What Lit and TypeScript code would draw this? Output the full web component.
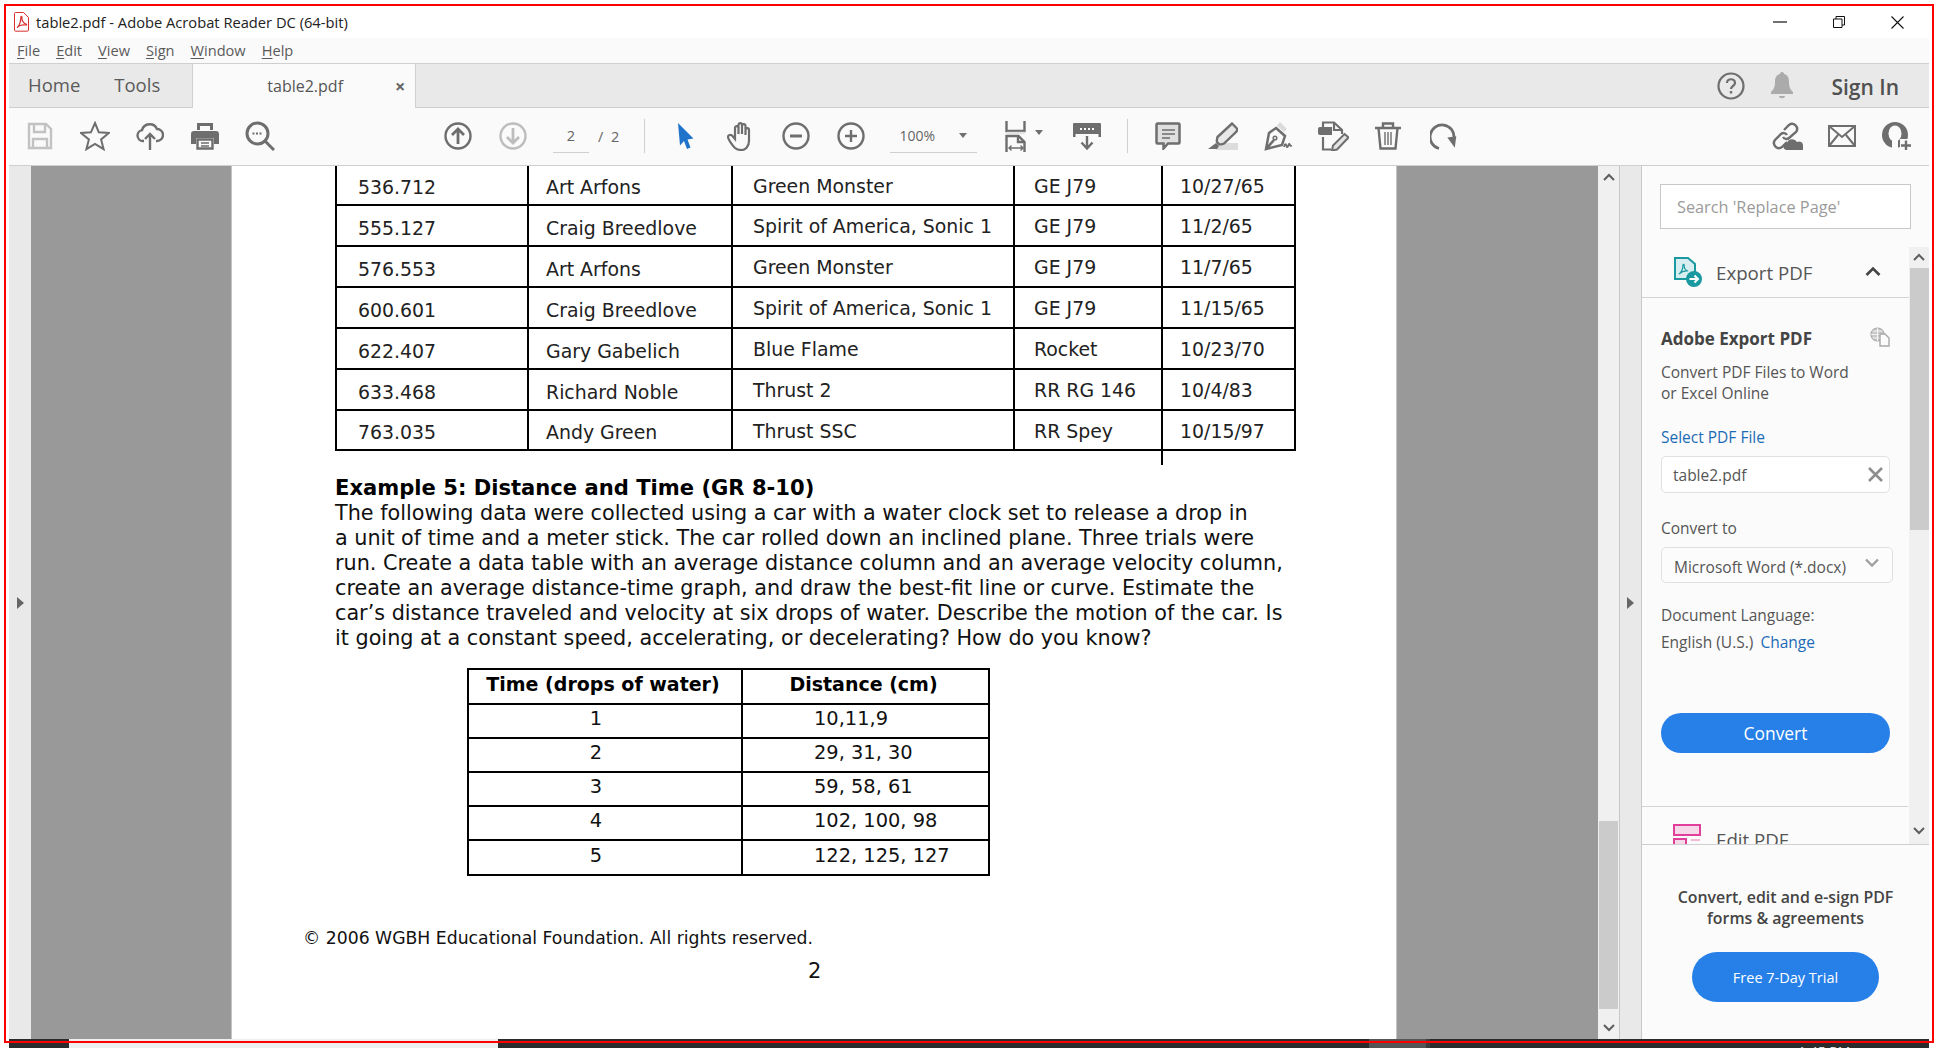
import { LitElement, css, html, svg } from "lit";
import { customElement } from "lit/decorators.js";

const speedRows = [
  ["536.712", "Art Arfons", "Green Monster", "GE J79", "10/27/65"],
  ["555.127", "Craig Breedlove", "Spirit of America, Sonic 1", "GE J79", "11/2/65"],
  ["576.553", "Art Arfons", "Green Monster", "GE J79", "11/7/65"],
  ["600.601", "Craig Breedlove", "Spirit of America, Sonic 1", "GE J79", "11/15/65"],
  ["622.407", "Gary Gabelich", "Blue Flame", "Rocket", "10/23/70"],
  ["633.468", "Richard Noble", "Thrust 2", "RR RG 146", "10/4/83"],
  ["763.035", "Andy Green", "Thrust SSC", "RR Spey", "10/15/97"],
];

const dropRows = [
  ["1", "10,11,9"],
  ["2", "29, 31, 30"],
  ["3", "59, 58, 61"],
  ["4", "102, 100, 98"],
  ["5", "122, 125, 127"],
];

const paragraph = [
  "The following data were collected using a car with a water clock set to release a drop in",
  "a unit of time and a meter stick. The car rolled down an inclined plane. Three trials were",
  "run. Create a data table with an average distance column and an average velocity column,",
  "create an average distance-time graph, and draw the best-fit line or curve. Estimate the",
  "car\u2019s distance traveled and velocity at six drops of water. Describe the motion of the car. Is",
  "it going at a constant speed, accelerating, or decelerating? How do you know?",
];

const icon = (w: number, h: number, body: unknown) => html`<svg
  width=${w} height=${h} viewBox="0 0 ${w} ${h}" fill="none" stroke="#6e6e6e" stroke-width="2.4"
>${body}</svg>`;

const icons = {
  save: icon(26, 28, svg`<g stroke="#c2c2c2"><path d="M2 2h17l5 5v19H2z"/><path d="M7 2v8h11V2M6 26v-9h14v9"/></g>`),
  star: icon(30, 30, svg`<path stroke-width="2" d="M15 2l3.800 9.300 10 .700-7.700 6.400 2.500 9.800-8.600-5.300-8.600 5.300 2.500-9.800L.9 12l10-.7z"/>`),
  cloud: icon(28, 30, svg`<path d="M8 20H7a5.500 5.500 0 0 1-1-10.900A8 8 0 0 1 21 8a6 6 0 0 1 0 12h-1"/><path d="M14 29V13M9 18l5-5 5 5"/>`),
  print: icon(28, 28, svg`<path fill="#6e6e6e" stroke="none" d="M6 1h16v7h-3V4H9v4H6zM3 9h22a3 3 0 0 1 3 3v10h-5v-6H5v6H0V12a3 3 0 0 1 3-3z"/><path stroke-width="2.400" d="M6.500 17.500h15v9h-15z"/><path stroke-width="1.500" d="M10 21h8M10 24h8"/>`),
  find: icon(30, 30, svg`<circle cx="12.500" cy="12.500" r="10.500" stroke-width="3"/><path stroke-width="3" d="M20 20l9 9"/><path stroke-width="2" stroke-dasharray="2 1.500" d="M7.500 12.500h10"/>`),
  up: icon(28, 28, svg`<circle cx="14" cy="14" r="12.500"/><path stroke-width="2.800" d="M14 22V7M8 13l6-6 6 6"/>`),
  down: icon(28, 28, svg`<g stroke="#bdbdbd"><circle cx="14" cy="14" r="12.500"/><path stroke-width="2.800" d="M14 6v15M8 15l6 6 6-6"/></g>`),
  cursor: icon(17, 26, svg`<path fill="#1f73cb" stroke="none" d="M1 0l15.500 15.500-6 1 3 8-3.500 1.500-3-8-4 4.500z"/>`),
  hand: icon(28, 29, svg`<path stroke-width="2.200" d="M8 26C5 23 1 17 1 15c0-2 3-3 4.500-1L8 17V6c0-2.500 3.500-2.500 3.500 0v6V3c0-2.500 3.500-2.500 3.500 0v9V4c0-2.500 3.500-2.500 3.500 0v9V8c0-2.500 3.500-2.500 3.500 0v11c0 6-4 9-7.500 9s-5-.5-6.500-2z"/>`),
  minus: icon(28, 28, svg`<circle cx="14" cy="14" r="12.500"/><path stroke-width="3" d="M8 14h12"/>`),
  plus: icon(28, 28, svg`<circle cx="14" cy="14" r="12.500"/><path stroke-width="2.400" d="M8 14h12M14 8v12"/>`),
  fit: icon(22, 31, svg`<path d="M1.500 0v10h18V0"/><path stroke="#e4e4e4" d="M2 12h18"/><path d="M1.500 31V15h12l6 6v10M13 15v6h6"/><path stroke-width="1.400" d="M4 27h14M6.500 24.500L4 27l2.500 2.500M15.500 24.500L18 27l-2.500 2.500"/>`),
  ruler: icon(28, 27, svg`<path fill="#6e6e6e" stroke="none" d="M1 0h26a1 1 0 0 1 1 1v13h-2.500v-3h-23v3H0V1a1 1 0 0 1 1-1z"/><path stroke="#fff" stroke-width="2" stroke-dasharray="2 2" d="M7 6h14"/><path d="M14 13v12M8.500 19.500l5.500 6 5.500-6"/>`),
  comment: icon(26, 28, svg`<path fill="#dfdfdf" stroke-width="2.500" d="M2.500 1.500h21a1 1 0 0 1 1 1v18a1 1 0 0 1-1 1H13l-4.500 5v-5h-6a1 1 0 0 1-1-1v-18a1 1 0 0 1 1-1z"/><path stroke-width="1.500" d="M7 8h13M7 12h13M7 16h8"/>`),
  highlight: icon(30, 28, svg`<path fill="#dcdcdc" stroke="none" d="M8 21h22v7H8z"/><path fill="#e8e8e8" stroke-width="2.400" d="M24 1.500l4.500 4.500c1 1 1 2 0 3.500L16 21.500c-2 1-4 1-5 .5l-2-2c-.5-1 0-3 .500-5z"/><path fill="#6e6e6e" stroke="none" d="M8 21l3 3-2 3H0z"/>`),
  pen: icon(30, 29, svg`<path fill="#dcdcdc" stroke="none" d="M17 0l7 7-3 3-7-6z"/><path stroke-width="2.500" d="M13 6l9 8-3 9-16 4L6 11zM3 27l8-9"/><circle cx="12" cy="16" r="1.800" stroke-width="1.500"/><path stroke-width="1.800" d="M21 25c1-4 2-3 2.500-1s1.500 1 2-1 1-1 1.500 0 1 1 2 .5"/>`),
  editDoc: icon(31, 30, svg`<path stroke-width="2.200" d="M5 6V1.500h11L24 9v4M5 16v12.500h8M16 1.500V9h8"/><path fill="#6e6e6e" stroke="none" d="M2 6h12v8H2a2 2 0 0 1-2-2V8a2 2 0 0 1 2-2z"/><path stroke-width="2" fill="#e4e4e4" d="M26.500 13l4 3.500L19 28.500l-5 1 1-5z"/>`),
  trash: icon(26, 28, svg`<path d="M0 6h26M8 5V1.500h10V5M3.500 6l2 20.500h15l2-20.500"/><path stroke-width="1.400" d="M10 10v13M13 10v13M16 10v13"/>`),
  rotate: icon(27, 27, svg`<path stroke-width="2.800" d="M9 25.500A12 12 0 1 1 24 15"/><path fill="#6e6e6e" stroke="none" d="M18 14h9l-3 11z" transform="rotate(-8 22 19)"/>`),
  link: icon(31, 29, svg`<path stroke-width="2.400" d="M12 8l5-5a5 5 0 0 1 7 7l-7 6a4 4 0 0 1-6-1M15 20l-5 5a5 5 0 0 1-7-7l6-6a4 4 0 0 1 6 1"/><path fill="#6e6e6e" stroke="none" d="M15 28a3.500 3.500 0 0 1 0-7 5.500 5.500 0 0 1 10-1 4 4 0 0 1 6 4v4z"/>`),
  mail: icon(28, 22, svg`<path stroke-width="2" d="M1 1h26v20H1zM1 1l13 11L27 1M1 21l9-11M27 21l-9-11"/>`),
  user: icon(30, 28, svg`<circle cx="13" cy="13" r="13" fill="#6e6e6e" stroke="none"/><ellipse cx="13" cy="11.500" rx="6.500" ry="8" fill="#fafafa" stroke="none"/><path fill="#fafafa" stroke="none" d="M10 17h6v10h-6zM18 17h12v11H18z"/><path stroke-width="2.400" d="M19 23.500h10M24 18.500v9.500"/>`),
  help: icon(28, 28, svg`<circle cx="14" cy="14" r="12.500" stroke-width="2.200"/><path stroke-width="2.200" d="M10 11c0-5 8-5 8 0 0 3-4 3-4 6"/><path stroke-width="2.400" d="M14 19v2.500"/>`),
  bell: icon(22, 27, svg`<path fill="#ababab" stroke="none" d="M11 0c1.500 0 2 1 2 2 4 1 5 4 5 8 0 6 2 8 4 10v2H0v-2c2-2 4-4 4-10 0-4 1-7 5-8 0-1 .5-2 2-2zM8 24h6c0 3-6 3-6 0z"/>`),
  pdf: html`<svg width="15" height="20" viewBox="0 0 15 20" fill="none" stroke="#d8302f" stroke-width="1">
    <path d="M1.500.5h8l5 5v12.500a1.200 1.200 0 0 1-1.200 1.200H1.700A1.200 1.200 0 0 1 .5 18V1.500a1 1 0 0 1 1-1z"/>
    <path stroke-width="1.200" d="M3 15.500c2-1 4-6 3.800-10-.1-1.500 1.500-1.500 1.200.5-.4 3 2 5.500 4 6 1 .3 1 1.300-.5 1-3-.5-6-.2-8.500 2.500z"/>
  </svg>`,
  exportPdf: html`<svg width="28" height="30" viewBox="0 0 28 30" fill="none" stroke="#1a9aa0" stroke-width="2">
    <path fill="#d8eef0" d="M1 1h13l7 6v15H1z"/>
    <path stroke-width="1.200" d="M5 17c2-1 4-5 4-9 0-1 1.500-1 1.200.5-.4 2.500 1.500 5 4 5.500-3-.3-6 0-9.200 3z"/>
    <circle cx="20" cy="22" r="8" fill="#1a9aa0" stroke="none"/>
    <path stroke="#fff" stroke-width="2" d="M15.500 22h8M20.500 18.500L24 22l-3.500 3.500"/>
  </svg>`,
  globeDoc: html`<svg width="20" height="20" viewBox="0 0 20 20" fill="none" stroke="#a8a8a8" stroke-width="1.200">
    <circle cx="7.500" cy="7.500" r="6.500" fill="#c9c9c9"/>
    <path stroke="#fbfbfb" stroke-width=".8" d="M1 7.500h13M7.500 1v13M2.500 4h10M2.500 11h10"/>
    <path fill="#fbfbfb" stroke-width="1.400" d="M10 7h5l4 4v8h-9z"/>
  </svg>`,
  editPdf: html`<svg width="28" height="24" viewBox="0 0 28 24" fill="none" stroke="#e0409a" stroke-width="2">
    <path fill="#f6d8e8" d="M1 1h26v10H1zM1 15h12v8H1z"/><path stroke-width="1.500" stroke="#f0a0cc" d="M18 16h9"/>
  </svg>`,
  clear: html`<svg width="15" height="15" viewBox="0 0 15 15" fill="none" stroke="#8e8e8e" stroke-width="2.600"><path d="M1 1l13 13M14 1L1 14"/></svg>`,
  collapse: html`<svg width="16" height="10" viewBox="0 0 16 10" fill="none" stroke="#444" stroke-width="2.600"><path d="M1.500 9L8 2.500 14.500 9"/></svg>`,
  selectArrow: html`<svg width="14" height="9" viewBox="0 0 14 9" fill="none" stroke="#a0a0a0" stroke-width="2.400"><path d="M1 1.500l6 6 6-6"/></svg>`,
};

@customElement("app-root")
export class AppRoot extends LitElement {
  static styles = css`
    :host {
      display: block;
      position: relative;
      width: 1938px;
      height: 1048px;
      overflow: hidden;
      background: #fff;
      font-family: "Open Sans", "Noto Sans", sans-serif;
      color: #444;
    }
    .frame {
      position: absolute;
      left: 4px;
      top: 4px;
      width: 1930px;
      height: 1039px;
      box-sizing: border-box;
      border: 2px solid #f00;
      pointer-events: none;
    }
    .window {
      display: flex;
      flex-direction: column;
      height: 1048px;
      padding: 6px 9px 0 9px;
      box-sizing: border-box;
    }
    .title {
      height: 32px;
      display: flex;
      align-items: center;
      font-size: 14.700px;
      color: #222;
      padding-left: 5px;
    }
    .title .name { margin-left: 7px; }
    .winctl { margin-left: auto; display: flex; align-items: center; padding-right: 25px; gap: 46px; }
    .winctl svg { display: block; }
    .menu {
      height: 24px;
      padding-bottom: 1px;
      background: #fafafa;
      border-bottom: 1px solid #cfcfcf;
      display: flex;
      align-items: center;
      font-size: 14.600px;
      color: #5a5a5a;
      padding-left: 8px;
      gap: 16px;
    }
    .menu u { text-underline-offset: 2px; }
    .tabs {
      height: 43px;
      background: #e9e9e9;
      border-bottom: 1px solid #cfcfcf;
      display: flex;
      align-items: stretch;
      font-size: 18.500px;
      color: #5a5a5a;
    }
    .tabs .plain { display: flex; align-items: center; padding-bottom: 2px; }
    .tabs .home { margin-left: 19px; }
    .tabs .tools { margin-left: 34px; width: 78px; }
    .tab {
      width: 224px;
      height: 44px;
      box-sizing: border-box;
      background: #fafafa;
      border-left: 1px solid #cfcfcf;
      border-right: 1px solid #cfcfcf;
      display: flex;
      align-items: center;
      font-size: 16px;
      color: #555;
      padding-left: 74px;
    }
    .tab .x { margin-left: 52px; font-size: 18px; font-weight: 700; color: #666; }
    .tabs .right { margin-left: auto; display: flex; align-items: center; padding-right: 30px; }
    .tabs .right svg { display: block; }
    .tabs .bell { margin-left: 26px; }
    .tabs .sign { margin-left: 38px; font-size: 21px; font-weight: 600; color: #505050; padding-top: 2px; }
    .toolbar {
      height: 56px;
      background: #fafafa;
      border-bottom: 1px solid #cfcfcf;
      display: flex;
      align-items: center;
      padding: 0 4.500px 1px 3px;
    }
    .btn { width: 55px; display: flex; justify-content: center; align-items: center; flex: none; }
    .btn svg { display: block; }
    .gap-nav { margin-left: 143.500px; }
    .page-input {
      width: 67px;
      margin-left: 12.500px;
      height: 34px;
      display: flex;
      align-items: center;
      font-size: 14.500px;
      color: #666;
    }
    .page-input .cur {
      width: 36px;
      height: 34px;
      line-height: 34px;
      text-align: center;
      border-bottom: 1px solid #cfcfcf;
      box-sizing: border-box;
    }
    .page-input .of { margin-left: 9px; word-spacing: 4px; }
    .sep { width: 1px; height: 34px; background: #cfcfcf; flex: none; margin: 0 13px 0 24px; }
    .zoom {
      width: 87px;
      margin-left: 11.500px;
      height: 34px;
      box-sizing: border-box;
      border-bottom: 1px solid #cfcfcf;
      display: flex;
      align-items: center;
      font-size: 14px;
      color: #666;
      padding-left: 10px;
      flex: none;
    }
    .caret { width: 0; height: 0; border: 4.500px solid transparent; border-top: 5px solid #6e6e6e; border-bottom: 0; flex: none; }
    .zoom .caret { margin-left: 24px; }
    .fit { width: 71.500px; margin-left: 11px; display: flex; align-items: center; padding-left: 17px; box-sizing: border-box; flex: none; }
    .fit .caret { margin-left: 8px; margin-bottom: 8px; }
    .sep.two { margin-left: 12.500px; }
    .right-group { margin-left: auto; display: flex; }
    .main { height: 873px; display: flex; }
    .rail { width: 22px; background: #e9e9e9; display: flex; align-items: center; justify-content: center; flex: none; }
    .rail.second { width: 21px; border-left: 1px solid #c8c8c8; border-right: 1px solid #c8c8c8; }
    .tri { width: 0; height: 0; border: 6px solid transparent; border-left: 7px solid #666; border-right: 0; }
    .gutter { background: #999; flex: none; }
    .gutter.a { width: 200px; }
    .gutter.b { width: 201px; }
    .page {
      width: 1166px;
      box-sizing: border-box;
      flex: none;
      background: #fff;
      border-left: 1px solid #c4c4c4;
      border-right: 1px solid #c4c4c4;
      padding-left: 103px;
      font-family: "DejaVu Sans", sans-serif;
      color: #111;
      overflow: hidden;
    }
    table { border-collapse: collapse; table-layout: fixed; }
    .speeds { width: 959px; font-size: 18.900px; color: #222; }
    .speeds td {
      border: 2px solid #000;
      height: 41px;
      padding: 1px 0 0 20px;
      box-sizing: border-box;
      white-space: nowrap;
    }
    .speeds tr:first-of-type td { border-top: 0; height: 39px; }
    .speeds tr:last-of-type td { height: 40px; }
    .speeds td:nth-child(1) { padding-left: 21px; }
    .speeds td:nth-child(2) { padding-left: 17px; }
    .speeds td:nth-child(4) { padding-left: 19px; }
    .speeds td:nth-child(5) { padding-left: 17px; }
    .speeds td.low { padding-top: 4px; }
    .stub { width: 2px; height: 14px; background: #000; margin-left: 826px; }
    h3 { margin: 10px 0 0; font-size: 21.100px; line-height: 25px; color: #000; font-weight: 700; white-space: nowrap; }
    .para { margin: 1px 0 0; font-size: 20.750px; line-height: 25.100px; white-space: nowrap; }
    .drops { width: 521px; margin: 16px 0 0 132px; font-size: 19.400px; color: #111; }
    .drops td { border: 2px solid #000; height: 34px; padding: 0 0 4px; box-sizing: border-box; text-align: center; }
    .drops td:first-child { padding-right: 18px; }
    .drops tr:last-of-type td { height: 35px; padding-bottom: 3px; }
    .drops th { border: 2px solid #000; height: 35px; padding: 0 4px 4px 0; box-sizing: border-box; font-size: 19px; color: #000; }
    .drops td.val { text-align: left; padding-left: 71px; }
    .copy { margin: 52px 0 0 -32px; font-size: 17.250px; line-height: 20px; white-space: nowrap; }
    .num { margin: 11px 0 0 473px; font-size: 21px; line-height: 24px; }
    .vscroll {
      width: 21px;
      background: #f0f0f0;
      flex: none;
      display: flex;
      flex-direction: column;
      align-items: center;
    }
    .chev { display: block; flex: none; }
    .vscroll .thumb { width: 19px; background: #cbcbcb; }
    .vscroll.doc .top { margin-top: 7px; }
    .vscroll.doc .thumb { margin-top: 639px; height: 188px; }
    .vscroll.doc .bot { margin-top: 14px; }
    .pane { width: 287px; flex: none; background: #fbfbfb; display: flex; flex-direction: column; }
    .search {
      margin: 18px 18px 0 18px;
      height: 45px;
      box-sizing: border-box;
      border: 1px solid #c8c8c8;
      background: #fff;
      font-size: 16.300px;
      color: #9a9a9a;
      display: flex;
      align-items: center;
      padding-left: 16px;
    }
    .tools-wrap { margin-top: 18px; height: 597px; display: flex; }
    .tools { width: 267px; overflow: hidden; flex: none; }
    .tool-head {
      height: 50px;
      border-bottom: 1px solid #d4d4d4;
      display: flex;
      align-items: center;
      padding-left: 32px;
      font-size: 18.700px;
      color: #555;
    }
    .tool-head span { margin-left: 14px; width: 149px; }
    .tool-head svg { display: block; flex: none; }
    .tool-head .up { margin-top: -2px; }
    .section { padding: 29px 0 0 19px; font-size: 15.500px; color: #555; height: 509px; box-sizing: border-box; border-bottom: 1px solid #d4d4d4; width: 266px; }
    .section .row { width: 229px; display: flex; justify-content: space-between; align-items: flex-start; height: 24px; }
    .section b { font-size: 17px; line-height: 24px; font-weight: 700; color: #444; }
    .desc { margin: 11px 0 0; line-height: 21px; }
    .label { line-height: 20px; }
    .label.link, .change { color: #1b6bb5; }
    .change { margin-left: 7px; }
    .gap-select { margin-top: 23px; }
    .gap-convert { margin-top: 25px; }
    .gap-doc { margin-top: 22px; }
    .gap-lang { margin-top: 7px; }
    .input {
      width: 229px;
      height: 37px;
      box-sizing: border-box;
      margin-top: 9px;
      border: 1px solid #e1e1e1;
      border-radius: 5px;
      background: #fff;
      display: flex;
      align-items: center;
      justify-content: space-between;
      padding: 0 6px 0 11px;
    }
    .input.sel { width: 232px; height: 36px; padding: 3px 13px 0 12px; background: #fcfcfc; }
    .input.sel svg { margin-top: -8px; }
    .primary {
      background: #2680e8;
      color: #fff;
      display: flex;
      align-items: center;
      justify-content: center;
    }
    .convert { width: 229px; height: 40px; margin-top: 61px; border-radius: 20px; font-size: 17.400px; }
    .tool-head.edit { border: 0; height: 40px; align-items: flex-start; padding: 17px 0 0 31px; }
    .tool-head.edit span { margin-top: 3px; margin-left: 15px; }
    .vscroll.tool { width: 20px; }
    .vscroll.tool .btn-top { height: 21px; display: flex; align-items: center; }
    .vscroll.tool .thumb { height: 262px; width: 19px; }
    .vscroll.tool .bot { margin-top: 296px; }
    .foot {
      border-top: 1px solid #cfcfcf;
      flex: 1;
      display: flex;
      flex-direction: column;
      align-items: center;
      padding-top: 42px;
      font-size: 15.900px;
      font-weight: 600;
      line-height: 21px;
      color: #444;
      text-align: center;
    }
    .trial { width: 187px; height: 50px; margin-top: 23px; border-radius: 25px; font-size: 14.500px; font-weight: 400; }
    .taskbar { height: 9px; display: flex; overflow: hidden; background: #2b2b2b; }
    .taskbar .light { width: 429px; background: #eee; margin-left: 60px; }
    .taskbar .active { width: 57px; background: #555; margin-left: 871px; }
    .taskbar .edge { width: 4px; background: #3c3c3c; }
    .taskbar .clock { margin-left: 368px; margin-top: 5px; font-size: 14px; line-height: 16px; color: #ddd; white-space: nowrap; }
  `;

  private chevron(up: boolean) {
    const d = up ? "M1 7l5-5 5 5" : "M1 2l5 5 5-5";
    return html`<svg class="chev" width="12" height="9" viewBox="0 0 12 9" fill="none" stroke="#5e5e5e" stroke-width="2"><path d=${d} /></svg>`;
  }

  private renderTitle() {
    return html`
      <div class="title">
        ${icons.pdf}<span class="name">table2.pdf - Adobe Acrobat Reader DC (64-bit)</span>
        <div class="winctl">
          <svg width="14" height="2" viewBox="0 0 14 2" stroke="#111" stroke-width="1.200"><path d="M0 1h14" /></svg>
          <svg width="12" height="12" viewBox="0 0 12 12" fill="none" stroke="#111"><path d="M.5 3h8.500v8.500H.5zM3 3V.5h8.500V9H9" /></svg>
          <svg width="13" height="13" viewBox="0 0 13 13" fill="none" stroke="#111" stroke-width="1.100"><path d="M.5.5l12 12M12.500.5l-12 12" /></svg>
        </div>
      </div>
      <div class="menu">
        <span><u>F</u>ile</span><span><u>E</u>dit</span><span><u>V</u>iew</span><span><u>S</u>ign</span><span><u>W</u>indow</span><span><u>H</u>elp</span>
      </div>
      <div class="tabs">
        <span class="plain home">Home</span>
        <span class="plain tools">Tools</span>
        <div class="tab">table2.pdf<span class="x">×</span></div>
        <div class="right">
          ${icons.help}<span class="bell">${icons.bell}</span><span class="sign">Sign In</span>
        </div>
      </div>
    `;
  }

  private renderToolbar() {
    const b = (i: unknown) => html`<div class="btn">${i}</div>`;
    return html`
      <div class="toolbar">
        ${b(icons.save)}${b(icons.star)}${b(icons.cloud)}${b(icons.print)}${b(icons.find)}
        <div class="btn gap-nav">${icons.up}</div>
        ${b(icons.down)}
        <div class="page-input"><span class="cur">2</span><span class="of">/ 2</span></div>
        <div class="sep"></div>
        ${b(icons.cursor)}${b(icons.hand)}${b(icons.minus)}${b(icons.plus)}
        <div class="zoom">100%<span class="caret"></span></div>
        <div class="fit">${icons.fit}<span class="caret"></span></div>
        ${b(icons.ruler)}
        <div class="sep two"></div>
        ${b(icons.comment)}${b(icons.highlight)}${b(icons.pen)}${b(icons.editDoc)}${b(icons.trash)}${b(icons.rotate)}
        <div class="right-group">${b(icons.link)}${b(icons.mail)}${b(icons.user)}</div>
      </div>
    `;
  }

  private renderPage() {
    return html`
      <div class="page">
        <table class="speeds">
          <colgroup><col width="192" /><col width="204" /><col width="282" /><col width="148" /><col width="133" /></colgroup>
          ${speedRows.map(
            (r) => html`<tr>${r.map((c, i) => html`<td class=${i < 2 ? "low" : ""}>${c}</td>`)}</tr>`,
          )}
        </table>
        <div class="stub"></div>
        <h3>Example 5: Distance and Time (GR 8-10)</h3>
        <div class="para">${paragraph.map((l) => html`<div>${l}</div>`)}</div>
        <table class="drops">
          <colgroup><col width="274" /><col width="247" /></colgroup>
          <tr><th>Time (drops of water)</th><th>Distance (cm)</th></tr>
          ${dropRows.map((r) => html`<tr><td>${r[0]}</td><td class="val">${r[1]}</td></tr>`)}
        </table>
        <div class="copy">© 2006 WGBH Educational Foundation. All rights reserved.</div>
        <div class="num">2</div>
      </div>
    `;
  }

  private renderPane() {
    return html`
      <div class="pane">
        <div class="search">Search 'Replace Page'</div>
        <div class="tools-wrap">
          <div class="tools">
            <div class="tool-head">${icons.exportPdf}<span>Export PDF</span><div class="up">${icons.collapse}</div></div>
            <div class="section">
              <div class="row"><b>Adobe Export PDF</b>${icons.globeDoc}</div>
              <p class="desc">Convert PDF Files to Word<br />or Excel Online</p>
              <div class="label link gap-select">Select PDF File</div>
              <div class="input">table2.pdf${icons.clear}</div>
              <div class="label gap-convert">Convert to</div>
              <div class="input sel">Microsoft Word (*.docx)${icons.selectArrow}</div>
              <div class="label gap-doc">Document Language:</div>
              <div class="label gap-lang">English (U.S.)<span class="change">Change</span></div>
              <div class="primary convert">Convert</div>
            </div>
            <div class="tool-head edit">${icons.editPdf}<span>Edit PDF</span></div>
          </div>
          <div class="vscroll tool">
            <div class="btn-top">${this.chevron(true)}</div>
            <div class="thumb"></div>
            <div class="bot">${this.chevron(false)}</div>
          </div>
        </div>
        <div class="foot">
          <div>Convert, edit and e-sign PDF<br />forms &amp; agreements</div>
          <div class="primary trial">Free 7-Day Trial</div>
        </div>
      </div>
    `;
  }

  render() {
    return html`
      <div class="window">
        ${this.renderTitle()}
        ${this.renderToolbar()}
        <div class="main">
          <div class="rail"><span class="tri"></span></div>
          <div class="gutter a"></div>
          ${this.renderPage()}
          <div class="gutter b"></div>
          <div class="vscroll doc">
            <div class="top">${this.chevron(true)}</div>
            <div class="thumb"></div>
            <div class="bot">${this.chevron(false)}</div>
          </div>
          <div class="rail second"><span class="tri"></span></div>
          ${this.renderPane()}
        </div>
        <div class="taskbar">
          <div class="light"></div>
          <div class="active"></div>
          <div class="edge"></div>
          <div class="clock">1:45 PM</div>
        </div>
      </div>
      <div class="frame"></div>
    `;
  }
}
